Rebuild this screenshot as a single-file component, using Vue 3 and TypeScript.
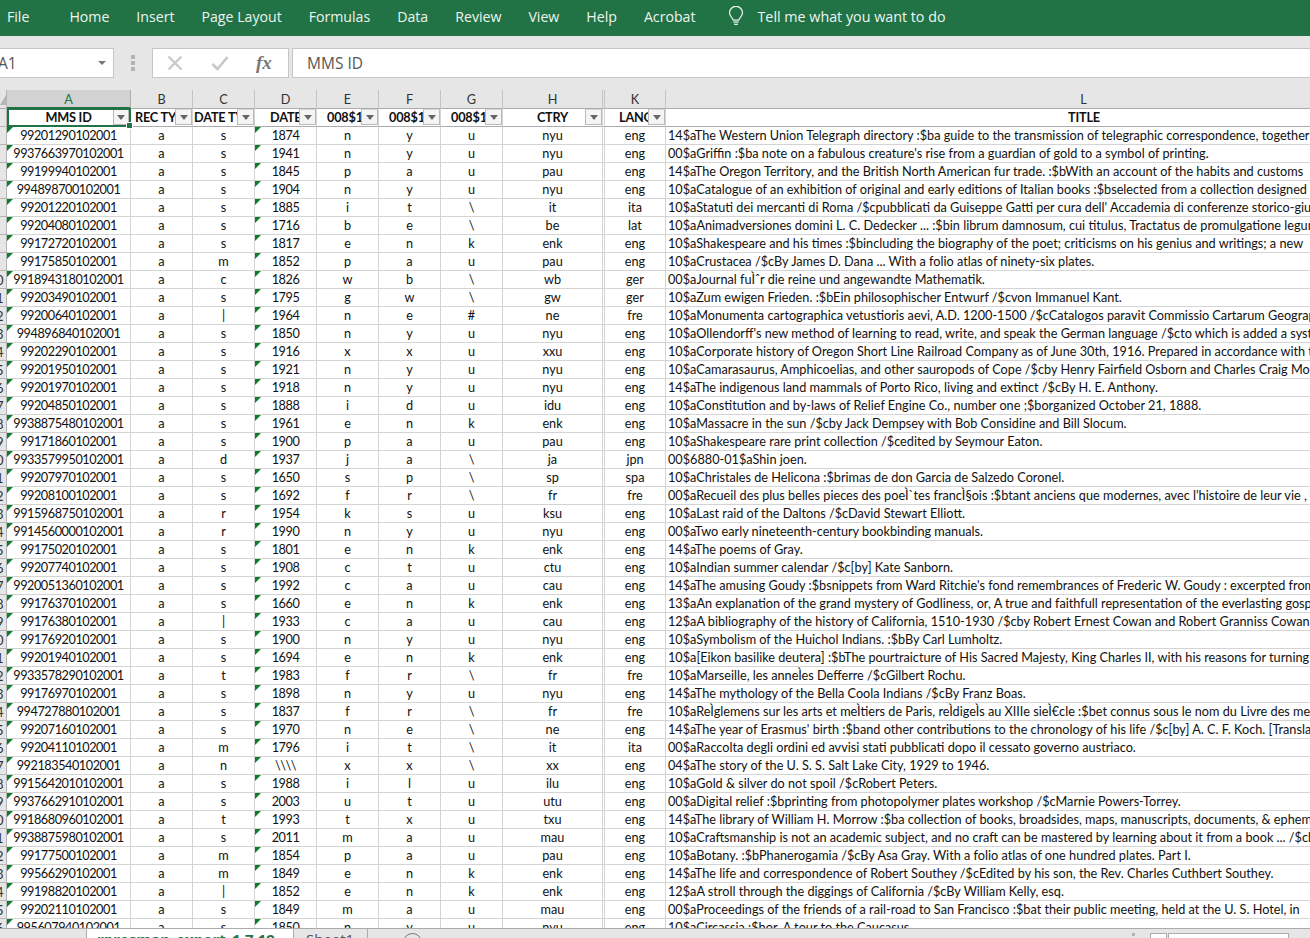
<script setup lang="ts">
const menus = ['Home', 'Insert', 'Page Layout', 'Formulas', 'Data', 'Review', 'View', 'Help', 'Acrobat']

const columns = [
  { letter: 'A', label: 'MMS ID', filter: true },
  { letter: 'B', label: 'REC TYPE', filter: true },
  { letter: 'C', label: 'DATE TYPE', filter: true },
  { letter: 'D', label: 'DATE', filter: true },
  { letter: 'E', label: '008$1', filter: true },
  { letter: 'F', label: '008$1', filter: true },
  { letter: 'G', label: '008$1', filter: true },
  { letter: 'H', label: 'CTRY', filter: true },
  { letter: '', label: '', filter: false },
  { letter: 'K', label: 'LANG', filter: true },
  { letter: 'L', label: 'TITLE', filter: false },
]

const raw = String.raw`99201290102001 a s 1874 n y u nyu eng
9937663970102001 a s 1941 n y u nyu eng
99199940102001 a s 1845 p a u pau eng
994898700102001 a s 1904 n y u nyu eng
99201220102001 a s 1885 i t \ it ita
99204080102001 a s 1716 b e \ be lat
99172720102001 a s 1817 e n k enk eng
99175850102001 a m 1852 p a u pau eng
9918943180102001 a c 1826 w b \ wb ger
99203490102001 a s 1795 g w \ gw ger
99200640102001 a | 1964 n e # ne fre
994896840102001 a s 1850 n y u nyu eng
99202290102001 a s 1916 x x u xxu eng
99201950102001 a s 1921 n y u nyu eng
99201970102001 a s 1918 n y u nyu eng
99204850102001 a s 1888 i d u idu eng
9938875480102001 a s 1961 e n k enk eng
99171860102001 a s 1900 p a u pau eng
9933579950102001 a d 1937 j a \ ja jpn
99207970102001 a s 1650 s p \ sp spa
99208100102001 a s 1692 f r \ fr fre
9915968750102001 a r 1954 k s u ksu eng
9914560000102001 a r 1990 n y u nyu eng
99175020102001 a s 1801 e n k enk eng
99207740102001 a s 1908 c t u ctu eng
9920051360102001 a s 1992 c a u cau eng
99176370102001 a s 1660 e n k enk eng
99176380102001 a | 1933 c a u cau eng
99176920102001 a s 1900 n y u nyu eng
99201940102001 a s 1694 e n k enk eng
9933578290102001 a t 1983 f r \ fr fre
99176970102001 a s 1898 n y u nyu eng
994727880102001 a s 1837 f r \ fr fre
99207160102001 a s 1970 n e \ ne eng
99204110102001 a m 1796 i t \ it ita
992183540102001 a n \\\\ x x \ xx eng
9915642010102001 a s 1988 i l u ilu eng
9937662910102001 a s 2003 u t u utu eng
9918680960102001 a t 1993 t x u txu eng
9938875980102001 a s 2011 m a u mau eng
99177500102001 a m 1854 p a u pau eng
99566290102001 a m 1849 e n k enk eng
99198820102001 a | 1852 e n k enk eng
99202110102001 a s 1849 m a u mau eng
995607940102001 a s 1850 n y u nyu eng`

const titles = [
  "14$aThe Western Union Telegraph directory :$ba guide to the transmission of telegraphic correspondence, together",
  "00$aGriffin :$ba note on a fabulous creature's rise from a guardian of gold to a symbol of printing.",
  "14$aThe Oregon Territory, and the British North American fur trade. :$bWith an account of the habits and customs",
  "10$aCatalogue of an exhibition of original and early editions of Italian books :$bselected from a collection designed",
  "10$aStatuti dei mercanti di Roma /$cpubblicati da Guiseppe Gatti per cura dell' Accademia di conferenze storico-giuridiche",
  "10$aAnimadversiones domini L. C. Dedecker ... :$bin librum damnosum, cui titulus, Tractatus de promulgatione legum",
  "10$aShakespeare and his times :$bincluding the biography of the poet; criticisms on his genius and writings; a new",
  "10$aCrustacea /$cBy James D. Dana ... With a folio atlas of ninety-six plates.",
  "00$aJournal fuÌˆr die reine und angewandte Mathematik.",
  "10$aZum ewigen Frieden. :$bEin philosophischer Entwurf /$cvon Immanuel Kant.",
  "10$aMonumenta cartographica vetustioris aevi, A.D. 1200-1500 /$cCatalogos paravit Commissio Cartarum Geographica",
  "10$aOllendorff's new method of learning to read, write, and speak the German language /$cto which is added a system",
  "10$aCorporate history of Oregon Short Line Railroad Company as of June 30th, 1916. Prepared in accordance with the",
  "10$aCamarasaurus, Amphicoelias, and other sauropods of Cope /$cby Henry Fairfield Osborn and Charles Craig Mook",
  "14$aThe indigenous land mammals of Porto Rico, living and extinct /$cBy H. E. Anthony.",
  "10$aConstitution and by-laws of Relief Engine Co., number one ;$borganized October 21, 1888.",
  "10$aMassacre in the sun /$cby Jack Dempsey with Bob Considine and Bill Slocum.",
  "10$aShakespeare rare print collection /$cedited by Seymour Eaton.",
  "00$6880-01$aShin joen.",
  "10$aChristales de Helicona :$brimas de don Garcia de Salzedo Coronel.",
  "00$aRecueil des plus belles pieces des poeÌ`tes francÌ§ois :$btant anciens que modernes, avec l'histoire de leur vie ,",
  "10$aLast raid of the Daltons /$cDavid Stewart Elliott.",
  "00$aTwo early nineteenth-century bookbinding manuals.",
  "14$aThe poems of Gray.",
  "10$aIndian summer calendar /$c[by] Kate Sanborn.",
  "14$aThe amusing Goudy :$bsnippets from Ward Ritchie's fond remembrances of Frederic W. Goudy : excerpted from",
  "13$aAn explanation of the grand mystery of Godliness, or, A true and faithfull representation of the everlasting gospel",
  "12$aA bibliography of the history of California, 1510-1930 /$cby Robert Ernest Cowan and Robert Granniss Cowan.",
  "10$aSymbolism of the Huichol Indians. :$bBy Carl Lumholtz.",
  "10$a[Eikon basilike deutera] :$bThe pourtraicture of His Sacred Majesty, King Charles II, with his reasons for turning",
  "10$aMarseille, les anneÌes Defferre /$cGilbert Rochu.",
  "14$aThe mythology of the Bella Coola Indians /$cBy Franz Boas.",
  "10$aReÌglemens sur les arts et meÌtiers de Paris, reÌdigeÌs au XIIIe sieÌ€cle :$bet connus sous le nom du Livre des metiers",
  "14$aThe year of Erasmus' birth :$band other contributions to the chronology of his life /$c[by] A. C. F. Koch. [Translated",
  "00$aRaccolta degli ordini ed avvisi stati pubblicati dopo il cessato governo austriaco.",
  "04$aThe story of the U. S. S. Salt Lake City, 1929 to 1946.",
  "10$aGold & silver do not spoil /$cRobert Peters.",
  "00$aDigital relief :$bprinting from photopolymer plates workshop /$cMarnie Powers-Torrey.",
  "14$aThe library of William H. Morrow :$ba collection of books, broadsides, maps, manuscripts, documents, & ephemera",
  "10$aCraftsmanship is not an academic subject, and no craft can be mastered by learning about it from a book ... /$cby",
  "10$aBotany. :$bPhanerogamia /$cBy Asa Gray. With a folio atlas of one hundred plates. Part I.",
  "14$aThe life and correspondence of Robert Southey /$cEdited by his son, the Rev. Charles Cuthbert Southey.",
  "12$aA stroll through the diggings of California /$cBy William Kelly, esq.",
  "00$aProceedings of the friends of a rail-road to San Francisco :$bat their public meeting, held at the U. S. Hotel, in",
  "10$aCircassia :$bor, A tour to the Caucasus.",
]

const rows = raw.split('\n').map((line, i) => {
  const p = line.split(' ')
  return { num: i + 2, id: p[0], mid: p.slice(1, 3), date: p[3], rest: p.slice(4, 7), ctry: p[7], lang: p[8], title: titles[i] }
})
</script>

<template>
  <div class="app">
    <header class="ribbon">
      <span class="menu file">File</span>
      <span v-for="m in menus" :key="m" class="menu">{{ m }}</span>
      <svg class="bulb" width="16" height="20" viewBox="0 0 16 20" fill="none" stroke="#eef4f0" stroke-width="1.2">
        <path d="M5.2 14.2c0-2.2-3.7-3.6-3.7-7.4a6.5 6.5 0 0 1 13 0c0 3.8-3.7 5.2-3.7 7.4z" />
        <path d="M5.4 16.2h5.2M6.2 18.4h3.6" />
      </svg>
      <span class="tell">Tell me what you want to do</span>
    </header>

    <section class="formula">
      <div class="namebox">
        <span>A1</span>
        <i class="caret"></i>
      </div>
      <div class="grip"><i></i><i></i><i></i></div>
      <div class="fxbox">
        <svg width="16" height="16" viewBox="0 0 16 16" fill="none" stroke="#c8c8c8" stroke-width="2.2"><path d="M1.5 1.5l13 13M14.5 1.5l-13 13" /></svg>
        <svg width="18" height="16" viewBox="0 0 18 16" fill="none" stroke="#c8c8c8" stroke-width="2.6"><path d="M1.5 9l5 5L16.5 2" /></svg>
        <span class="fx">fx</span>
      </div>
      <div class="input">MMS ID</div>
    </section>

    <section class="sheet">
      <div class="row colheads">
        <div class="gutter corner"><i></i></div>
        <div v-for="(c, i) in columns" :key="i" class="colhead" :class="{ active: c.letter === 'A' }">{{ c.letter }}</div>
      </div>
      <div class="row heads">
        <div class="gutter"></div>
        <div v-for="(c, i) in columns" :key="i" class="head" :class="[`h-${c.letter || 'x'}`]">
          <span class="label">{{ c.label }}</span>
          <button v-if="c.filter" class="filter" type="button"><i></i></button>
          <template v-if="i === 0"><b class="sel"></b><b class="handle"></b></template>
        </div>
      </div>
      <div v-for="r in rows" :key="r.num" class="row data">
        <div class="gutter"><span>{{ r.num }}</span></div>
        <div class="cell flag">{{ r.id }}</div>
        <div v-for="(v, i) in r.mid" :key="i" class="cell">{{ v }}</div>
        <div class="cell flag">{{ r.date }}</div>
        <div v-for="(v, i) in r.rest" :key="i" class="cell">{{ v }}</div>
        <div class="cell">{{ r.ctry }}</div>
        <div class="cell"></div>
        <div class="cell">{{ r.lang }}</div>
        <div class="cell title">{{ r.title }}</div>
      </div>
    </section>

    <footer class="tabs">
      <div class="tab active">rpresman_export_1.7.19</div>
      <div class="tab">Sheet1</div>
      <i class="sep"></i>
      <i class="plus"></i>
      <div class="spacer"></div>
      <div class="dots"><i></i></div>
      <i class="sb small"></i>
      <i class="sb large"></i>
    </footer>
  </div>
</template>

<style>
html, body { margin: 0; overflow: hidden; background: #fff; }
</style>

<style scoped>
.app {
  width: 1310px;
  height: 938px;
  display: flex;
  flex-direction: column;
  overflow: hidden;
  background: #e6e6e6;
  font-family: Lato, "Liberation Sans", sans-serif;
}
.ribbon {
  flex: none;
  height: 36px;
  box-sizing: border-box;
  padding: 0 0 4px 7px;
  display: flex;
  align-items: center;
  background: #217346;
  color: #eef4f0;
  font-family: "Open Sans", sans-serif;
  font-size: 14.15px;
}
.menu { margin-right: 27px; white-space: nowrap; }
.file { margin-right: 40px; }
.bulb { margin: 0 13px 0 6px; }
.tell { white-space: nowrap; font-size: 14.3px; }

.formula {
  flex: none;
  height: 54px;
  box-sizing: border-box;
  padding: 12px 0;
  display: flex;
  color: #444;
  font-family: "Open Sans", sans-serif;
  font-size: 15.5px;
}
.namebox, .fxbox, .input {
  box-sizing: border-box;
  height: 30px;
  background: #fff;
  border: 1px solid #c6c6c6;
}
.namebox {
  width: 118px;
  margin-left: -4px;
  display: flex;
  align-items: center;
  justify-content: space-between;
  padding: 0 7px 0 1px;
  color: #555;
}
.caret { width: 0; height: 0; border: 4px solid transparent; border-top: 4px solid #777; border-bottom: 0; }
.grip { width: 38px; display: flex; flex-direction: column; align-items: center; justify-content: center; gap: 2px; }
.grip i { width: 4px; height: 4px; background: #b4b4b4; }
.fxbox {
  width: 137px;
  display: flex;
  align-items: center;
  padding-left: 14px;
  gap: 28px;
}
.fx { font: italic 700 19px "Liberation Serif", serif; color: #777; margin-left: -1px; }
.input { flex: 1; margin-left: 3px; padding-left: 14px; line-height: 28px; color: #555; border-right: 0; }

.sheet { flex: 1; min-height: 0; overflow: hidden; background: #fff; color: #111; font-size: 12.7px; }
.row {
  display: grid;
  grid-template-columns: 7px 124px repeat(6, 62px) 100px 2px 61px 836px;
  width: 1310px;
  overflow: visible;
}
.gutter {
  position: relative;
  overflow: hidden;
  box-sizing: border-box;
  background: #e6e6e6;
  border-bottom: 1px solid #b4b4b4;
  border-right: 1px solid #b4b4b4;
  height: 18px;
  font-size: 13px;
  color: #333;
  line-height: 18px;
}
.gutter span { display: block; width: 20px; margin-left: -14px; text-align: center; }
.colheads { height: 19px; }
.colheads .gutter { height: 19px; border-bottom-color: #ababab; }
.corner i {
  position: absolute;
  left: 0;
  top: 5px;
  width: 6px;
  height: 10px;
  background: #b6b6b6;
  clip-path: polygon(100% 0, 100% 100%, 0 100%);
}
.colhead {
  box-sizing: border-box;
  height: 19px;
  background: linear-gradient(#e6e6e6 0 18px, #ababab 18px);
  border-right: 1px solid #c4c4c4;
  text-align: center;
  line-height: 18px;
  color: #333;
  overflow: hidden;
}
.colhead.active { background: linear-gradient(#d2d2d2 0 17px, #217346 17px); color: #217346; border-right-color: #ababab; }

.head {
  position: relative;
  box-sizing: border-box;
  height: 18px;
  border-right: 1px solid #d4d4d4;
  border-bottom: 1px solid #ababab;
  display: flex;
  justify-content: center;
  overflow: hidden;
  font-weight: 700;
  letter-spacing: -0.2px;
  line-height: 17px;
  white-space: nowrap;
}
.h-A, .h-x { overflow: visible; }
.h-L { border-right: 0; }
.h-E, .h-F, .h-G { justify-content: flex-start; padding-left: 10px; }
.h-B { justify-content: flex-start; padding-left: 4px; }
.h-C { justify-content: flex-start; padding-left: 1px; }
.h-D { justify-content: flex-start; padding-left: 15px; }
.h-K { justify-content: flex-start; padding-left: 14px; }
.label { display: block; }
.filter {
  position: absolute;
  right: 0;
  top: 0;
  width: 17px;
  height: 16px;
  padding: 0;
  box-sizing: border-box;
  border: 1px solid #b9b9b9;
  border-top-color: #d8d8d8;
  background: #f4f4f4;
  display: flex;
  align-items: center;
  justify-content: center;
}
.h-A .filter { right: 1px; width: 16px; }
.filter i { width: 0; height: 0; border: 4px solid transparent; border-top: 5px solid #666; border-bottom: 0; }
.sel {
  position: absolute;
  left: 0;
  top: -1px;
  right: -1px;
  bottom: -1px;
  border: 2px solid #217346;
  pointer-events: none;
}
.handle {
  position: absolute;
  right: -3px;
  bottom: -3px;
  width: 5px;
  height: 5px;
  background: #217346;
  border: 1px solid #fff;
  z-index: 2;
}

.data { height: 18px; }
.cell {
  position: relative;
  box-sizing: border-box;
  height: 18px;
  border-right: 1px solid #d4d4d4;
  border-bottom: 1px solid #d4d4d4;
  text-align: center;
  line-height: 17px;
  white-space: nowrap;
  overflow: hidden;
}
.flag { letter-spacing: -0.45px; }
.flag::before {
  content: "";
  position: absolute;
  left: 0;
  top: 0;
  width: 6px;
  height: 6px;
  background: #0e7a2c;
  clip-path: polygon(0 0, 100% 0, 0 100%);
}
.title { text-align: left; padding-left: 2px; border-right: 0; }

.tabs {
  flex: none;
  height: 10px;
  box-sizing: border-box;
  border-top: 1px solid #ababab;
  display: flex;
  overflow: hidden;
  background: #e6e6e6;
  font-family: "Open Sans", sans-serif;
  font-size: 15px;
  line-height: 20px;
}
.tab {
  height: 30px;
  padding: 0 12px;
  box-sizing: border-box;
  white-space: nowrap;
  color: #555;
}
.tab.active {
  margin: -1px 0 0 86px;
  width: 208px;
  padding: 1px 0 0 10px;
  background: #fff;
  color: #217346;
  font-weight: 700;
  border-left: 1px solid #ababab;
  border-right: 1px solid #ababab;
}
.sep { width: 1px; height: 30px; margin-left: 1px; background: #ababab; }
.plus { width: 19px; height: 19px; box-sizing: border-box; margin: 4px 0 0 35px; border: 1px solid #777; border-radius: 50%; }
.spacer { flex: 1; }
.dots { width: 18px; }
.dots i { display: block; width: 3px; height: 3px; margin-top: 4px; background: #b4b4b4; }
.sb { height: 20px; margin-top: 4px; box-sizing: border-box; background: #fff; border: 1px solid #ababab; }
.small { width: 17px; }
.large { width: 121px; margin: 4px 21px 0 1px; }
</style>
